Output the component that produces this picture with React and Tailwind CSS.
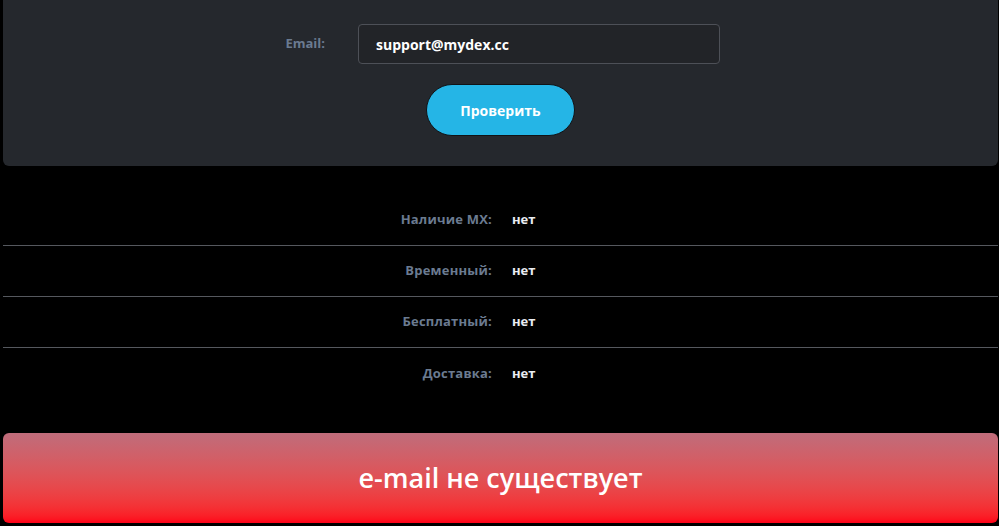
const rows = [
  { label: 'Наличие MX:', value: 'нет' },
  { label: 'Временный:', value: 'нет' },
  { label: 'Бесплатный:', value: 'нет' },
  { label: 'Доставка:', value: 'нет' },
];

export default function App() {
  return (
    <div className="min-h-[526px] bg-black pl-[3px] pr-px font-['Open_Sans',sans-serif]">
      {/* check form */}
      <div className="rounded-b-md bg-[#25282d] pt-6 pb-[30px]">
        <div className="flex items-center">
          <div className="w-[322px] text-right text-[13px] font-bold text-[#6b7b91]">Email:</div>
          <div className="ml-[33px] flex h-10 w-[362px] items-center rounded-sm border border-[#4d5057] bg-[#222428] px-[17px] text-[14px] font-bold text-white">
            support@mydex.cc
          </div>
        </div>
        <div className="mt-5 flex justify-center">
          <button className="h-[52px] w-[149px] rounded-full border border-[#111316] bg-[#25b5e6] text-[14px] font-bold text-white">
            Проверить
          </button>
        </div>
      </div>

      {/* results */}
      <div className="mt-[29px]">
        {rows.map((row, i) => (
          <div
            key={row.label}
            className={`flex h-[51px] items-center ${i < rows.length - 1 ? 'border-b border-[#55585e]' : ''}`}
          >
            <div className="w-[489px] text-right text-[13px] font-bold tracking-[0.2px] text-[#6b7b91]">{row.label}</div>
            <div className="ml-5 text-[13px] font-bold text-[#e9ecf2]">{row.value}</div>
          </div>
        ))}
      </div>

      <div className="mt-[34px] flex h-[90px] items-center justify-center rounded-md bg-gradient-to-b from-[#bf6c7b] to-[#ff0018]">
        <span className="text-[27px] font-semibold text-white">e-mail не существует</span>
      </div>
    </div>
  );
}
